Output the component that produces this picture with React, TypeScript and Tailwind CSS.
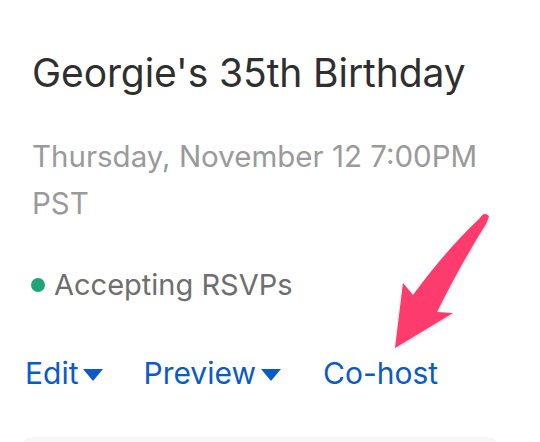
import React from "react";

function Caret() {
  return (
    <svg width="20" height="12" viewBox="0 0 20 12" className="ml-[5px] mt-[4px]">
      <path d="M0 0 H20 L10 12 Z" fill="#0b5bc6" />
    </svg>
  );
}

export default function App() {
  return (
    <div className="relative w-[540px] h-[442px] bg-white overflow-hidden" style={{ fontFamily: "Inter, 'Liberation Sans', sans-serif" }}>
      <div className="pl-[32px] pt-[50px]">
        <h1 className="text-[39px] leading-[46px] text-[#2f2f2f] font-normal tracking-[-0.1px]">Georgie's 35th Birthday</h1>
        <div className="mt-[37px] text-[29.5px] leading-[47px] text-[#9a9a9a] w-[470px]">
          Thursday, November 12 7:00PM PST
        </div>
        <div className="mt-[40px] flex items-center -ml-[1px]">
          <span className="w-[14px] h-[14px] rounded-full bg-[#1ea476] mr-[9px]" />
          <span className="text-[29px] leading-[36px] text-[#6e6e6e]">Accepting RSVPs</span>
        </div>
        <div className="mt-[52px] flex items-center -ml-[7px] text-[30px] leading-[36px] text-[#0b5bc6]">
          <span className="flex items-center">Edit<Caret /></span>
          <span className="flex items-center ml-[40px]">Preview<Caret /></span>
          <span className="ml-[42px]">Co-host</span>
        </div>
      </div>
      <div className="absolute left-[22px] top-[437px] w-[476px] h-[40px] rounded-[10px] bg-[#f7f7f7]" />
      <svg className="absolute left-0 top-0" width="540" height="442" viewBox="0 0 540 442">
        <defs>
          <filter id="sh" x="-20%" y="-20%" width="140%" height="140%">
            <feDropShadow dx="0" dy="1" stdDeviation="1.2" floodColor="#000" floodOpacity="0.18" />
          </filter>
        </defs>
        <path
          d="M480 218 Q484 211 489 216 Q488 220 486 224 Q462 262 437 312 L453 313 L395 348 L403 283 L413 295 Q446 250 480 218 Z"
          fill="#fd3a6d"
          filter="url(#sh)"
        />
      </svg>
    </div>
  );
}
